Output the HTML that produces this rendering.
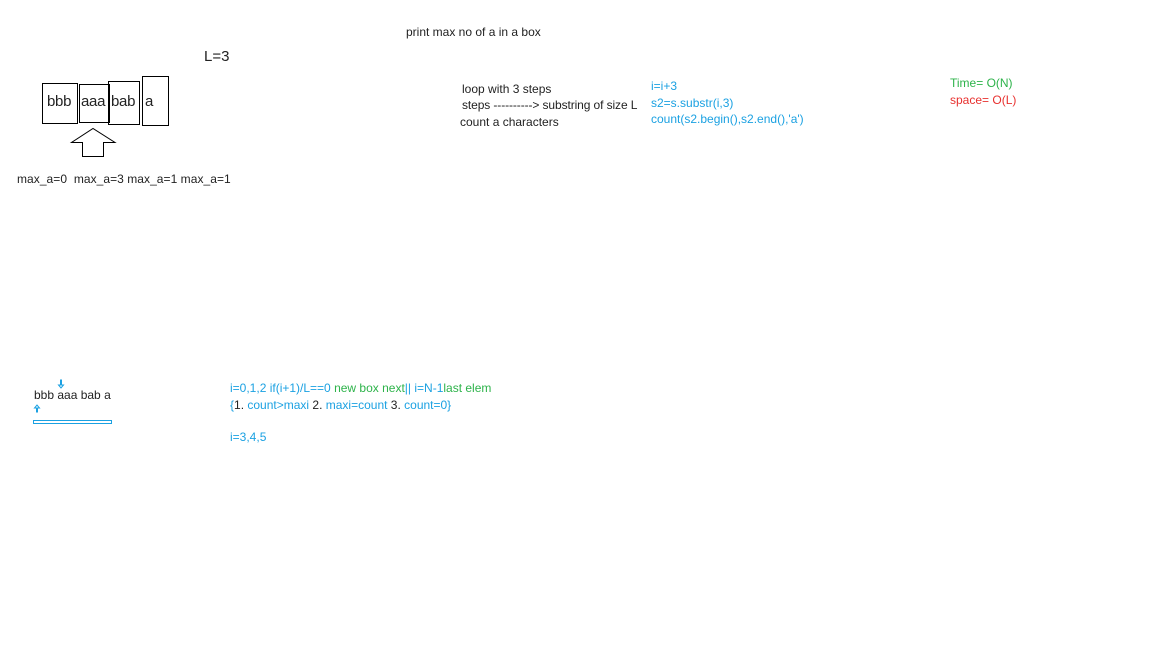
<html><head><style>
body{margin:0;width:1152px;height:648px;background:#fff;position:relative;overflow:hidden;font-family:"Liberation Sans",sans-serif;color:#222}
.t{position:absolute;white-space:nowrap;font-size:12px;line-height:16px}
.b{position:absolute;border:1px solid #000;box-sizing:border-box}
.bl{color:#1ba1e2}.g{color:#2db34a}.r{color:#e8312f}
</style></head><body>
<div class="t" style="left:406px;top:24px">print max no of a in a box</div>
<div class="t" style="left:204px;top:49px;font-size:15px">L=3</div>
<div class="b" style="left:42px;top:83px;width:36px;height:41px"></div>
<div class="b" style="left:79px;top:84px;width:31px;height:39px"></div>
<div class="b" style="left:108px;top:81px;width:32px;height:44px"></div>
<div class="b" style="left:142px;top:76px;width:27px;height:50px"></div>
<div class="t" style="left:47px;top:94px;font-size:15px;letter-spacing:-0.3px">bbb</div>
<div class="t" style="left:81px;top:94px;font-size:15px;letter-spacing:-0.3px">aaa</div>
<div class="t" style="left:111px;top:94px;font-size:15px;letter-spacing:-0.3px">bab</div>
<div class="t" style="left:145px;top:94px;font-size:15px">a</div>
<svg style="position:absolute;left:0;top:0" width="1152" height="648"><path d="M82.5 156.5V142.5H71.5L93 128.5L115 142.5H103.5V156.5Z" fill="none" stroke="#000"/>
<path d="M60.5 380v5h-2l2.5 3 2.5-3h-2v-5z" fill="none" stroke="#1ba1e2"/>
<path d="M36.5 412v-4h-2l2.5-3 2.5 3h-2v4z" fill="none" stroke="#1ba1e2"/>
<rect x="33.5" y="420.5" width="78" height="3" fill="none" stroke="#1ba1e2"/></svg>
<div class="t" style="left:17px;top:171px;font-size:12px;letter-spacing:0.05px">max_a=0&nbsp; max_a=3 max_a=1 max_a=1</div>
<div class="t" style="left:462px;top:81px">loop with 3 steps</div>
<div class="t" style="left:462px;top:97px;letter-spacing:-0.1px">steps ----------&gt; substring of size L</div>
<div class="t" style="left:460px;top:114px">count a characters</div>
<div class="t bl" style="left:651px;top:78px">i=i+3</div>
<div class="t bl" style="left:651px;top:95px">s2=s.substr(i,3)</div>
<div class="t bl" style="left:651px;top:111px">count(s2.begin(),s2.end(),'a')</div>
<div class="t g" style="left:950px;top:75px">Time= O(N)</div>
<div class="t r" style="left:950px;top:92px">space= O(L)</div>
<div class="t" style="left:34px;top:387px">bbb aaa bab a</div>
<div class="t" style="left:230px;top:380px"><span class="bl">i=0,1,2 if(i+1)/L==0 </span><span class="g">new box next</span><span class="bl">|| i=N-1</span><span class="g">last elem</span></div>
<div class="t" style="left:230px;top:397px"><span class="bl">{</span>1. <span class="bl">count&gt;maxi</span> 2. <span class="bl">maxi=count</span> 3. <span class="bl">count=0}</span></div>
<div class="t bl" style="left:230px;top:429px">i=3,4,5</div>
</body></html>
